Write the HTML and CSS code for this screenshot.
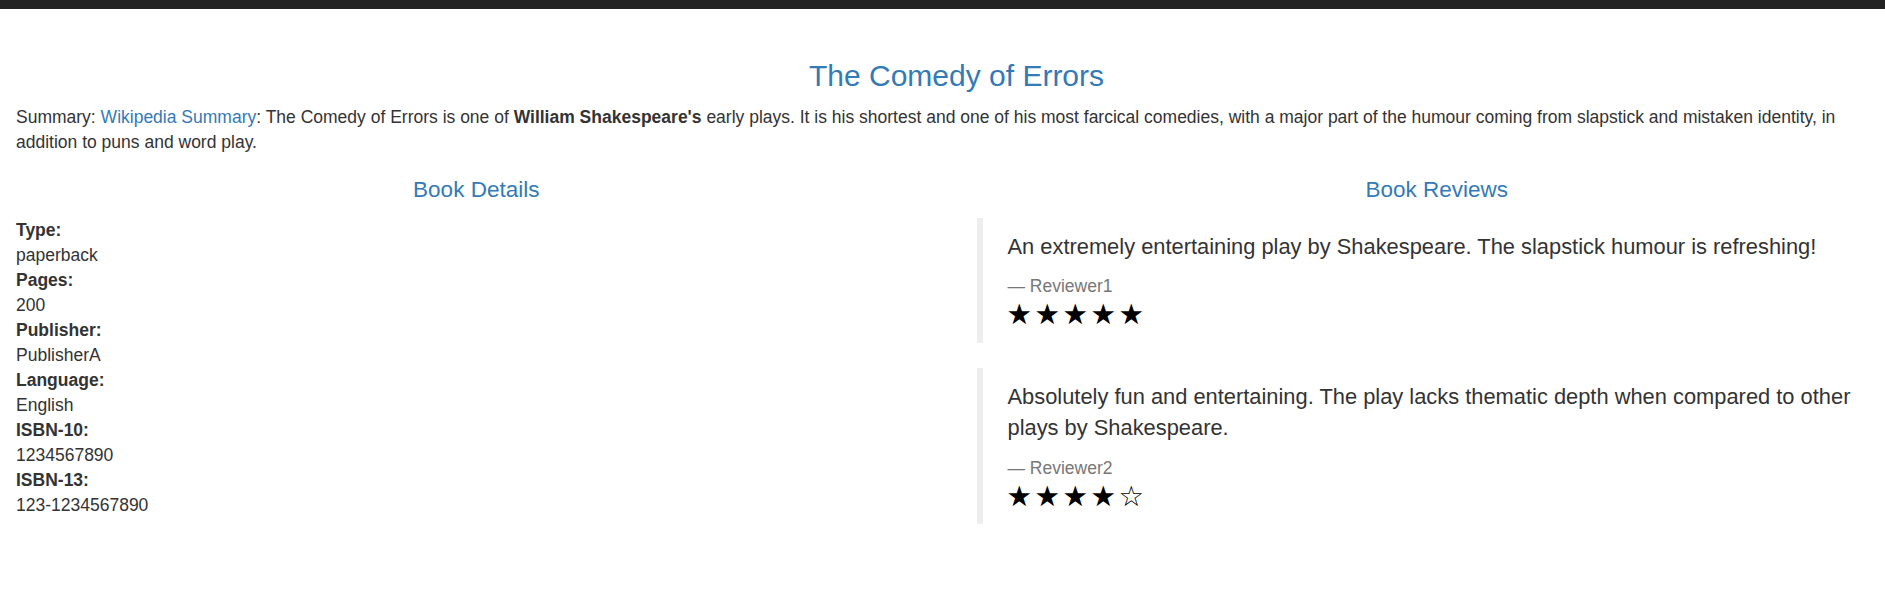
FILE: index.html
```html
<!DOCTYPE html>
<html lang="en">
<head>
<meta charset="utf-8">
<title>The Comedy of Errors</title>
<link rel="stylesheet" href="styles.css">
</head>
<body>
<div class="topbar"></div>
<main class="page">
  <h1 class="title">The Comedy of Errors</h1>
  <p class="summary">Summary: <a href="#">Wikipedia Summary</a>: The Comedy of Errors is one of <b>William Shakespeare's</b> early plays. It is his shortest and one of his most farcical comedies, with a major part of the humour coming from slapstick and mistaken identity, in addition to puns and word play.</p>
  <div class="cols">
    <section class="details">
      <h2 class="section-title">Book Details</h2>
      <dl class="facts">
        <dt>Type:</dt><dd>paperback</dd>
        <dt>Pages:</dt><dd>200</dd>
        <dt>Publisher:</dt><dd>PublisherA</dd>
        <dt>Language:</dt><dd>English</dd>
        <dt>ISBN-10:</dt><dd>1234567890</dd>
        <dt>ISBN-13:</dt><dd>123-1234567890</dd>
      </dl>
    </section>
    <section class="reviews">
      <h2 class="section-title">Book Reviews</h2>
      <blockquote class="review">
        <p>An extremely entertaining play by Shakespeare. The slapstick humour is refreshing!</p>
        <footer>— Reviewer1</footer>
        <div class="stars"><span>★</span><span>★</span><span>★</span><span>★</span><span>★</span></div>
      </blockquote>
      <blockquote class="review">
        <p>Absolutely fun and entertaining. The play lacks thematic depth when compared to other plays by Shakespeare.</p>
        <footer>— Reviewer2</footer>
        <div class="stars"><span>★</span><span>★</span><span>★</span><span>★</span><span>☆</span></div>
      </blockquote>
    </section>
  </div>
</main>
</body>
</html>
```
FILE: styles.css
```css
html, body {
  margin: 0;
  padding: 0;
  overflow-x: hidden;
}

body {
  font-family: "Liberation Sans", Arial, sans-serif;
  font-size: 17.5px;
  line-height: 25px;
  color: #333;
  background: #fff;
}

.topbar {
  height: 9px;
  background: #222;
}

.page {
  width: 1913px;
  box-sizing: border-box;
  padding: 0 16px;
}

.title {
  margin: 50px 0 12.7px;
  font-size: 30px;
  line-height: 33px;
  font-weight: normal;
  color: #337ab7;
  text-align: center;
}

.summary {
  margin: 0 0 23.3px;
}

.summary a {
  color: #337ab7;
  text-decoration: none;
}

.cols {
  display: grid;
  grid-template-columns: 1fr 1fr;
  column-gap: 40px;
  align-items: start;
}

.section-title {
  margin: 0 0 15.5px;
  font-size: 22.5px;
  line-height: 24.75px;
  font-weight: normal;
  color: #337ab7;
  text-align: center;
}

.facts {
  margin: 1px 0 0;
}

.facts dt {
  font-weight: bold;
}

.facts dd {
  margin: 0;
}

.review {
  margin: 0 0 25px;
  padding: 12.5px 25px;
  border-left: 6.25px solid #eee;
  font-size: 21.875px;
  line-height: 31.25px;
}

.review p {
  margin: 0 0 12.5px;
}

.review footer {
  font-size: 17.5px;
  line-height: 25px;
  color: #777;
}

.stars {
  color: #000;
  font-family: "DejaVu Sans", sans-serif;
  font-size: 28.5px;
  line-height: 31.25px;
  height: 31.25px;
  margin-left: -1px;
}

.stars span {
  display: inline-block;
  width: 28px;
}
```
